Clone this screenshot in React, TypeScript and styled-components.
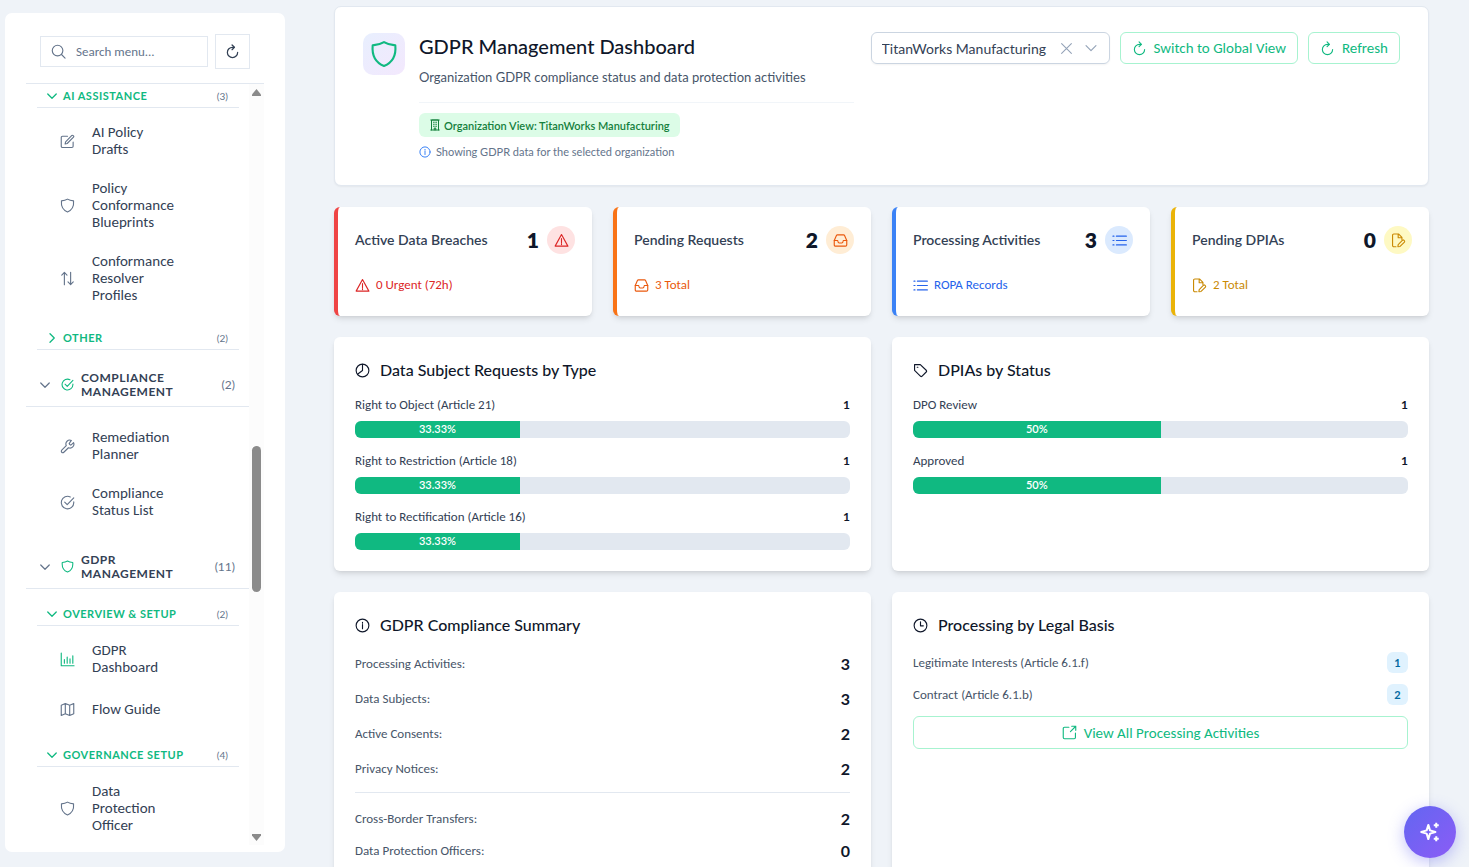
import React, { useState } from "react";
import styled, { createGlobalStyle } from "styled-components";

const GlobalStyle = createGlobalStyle`
  *, *::before, *::after { box-sizing: border-box; }
  body {
    margin: 0;
    background: #eff3f8;
    color: #0f172a;
    font-family: Carlito, Lato, "Liberation Sans", sans-serif;
    font-size: 13px;
  }
  button, input, select { font: inherit; color: inherit; }
  h1, h2, h3, p, ul, dl, dd { margin: 0; padding: 0; }
  ul { list-style: none; }
`;

/* ---------- icons ---------- */

const glyphs: Record<string, React.ReactNode> = {
  shield: <path d="M12 1.8c2.600 1.600 5.800 2.500 9.700 2.800 .8 8.500-2.400 14.700-9.700 17.700C4.700 19.300 1.500 13.100 2.300 4.600 6.200 4.300 9.400 3.400 12 1.800z" />,
  pencil: (
    <>
      <path d="M21 13v6.500a2 2 0 0 1-2 2H4a2 2 0 0 1-2-2V5.500a2 2 0 0 1 2-2h8" />
      <path d="M9 12.500 19 2.300q1-.8 2 .2l.6.600q1 1 0 2L11.500 15.200 8.200 16z" />
    </>
  ),
  sort: <path d="M7 22V2.500M2.800 6.500 7 2.300l4.200 4.200M17 2v19.500M12.800 17.500l4.200 4.200 4.200-4.200" />,
  check: (
    <>
      <path d="M22 11v1.200A10 10 0 1 1 16.500 3.200" />
      <path d="m7.500 11.500 4 4L22 4.500" />
    </>
  ),
  wrench: <path d="M15 6.500a1.200 1.200 0 0 0 0 1.500l1.400 1.400a1.200 1.200 0 0 0 1.500 0L21.700 5.800a6.200 6.200 0 0 1-8.200 8.200L6.100 21.200a2.300 2.300 0 0 1-3.300-3.300L10 10.500a6.200 6.200 0 0 1 8.200-8.200z" />,
  chart: <path d="M2 1.500V22h20.500M7 18v-6M11.500 18V8M16 18v-7M20.500 18V6" />,
  map: <path d="M2 5.200 8.500 2.500l7 2.800L22 2.500v16.300l-6.500 2.700-7-2.800L2 21.500zM8.500 2.500v16.200M15.500 5.300v16.200" />,
  refresh: (
    <>
      <path d="M20.200 13.500A8.200 8.200 0 1 1 12 5.300h2.500" />
      <path d="m11.300 1.500 3.800 3.800-3.800 3.800" />
    </>
  ),
  search: (
    <>
      <circle cx="10.500" cy="10.500" r="8.500" />
      <path d="m16.800 16.800 5.700 5.700" />
    </>
  ),
  down: <path d="m3.500 8 8.500 8.500L20.500 8" />,
  right: <path d="m8 3.500 8.500 8.500L8 20.500" />,
  times: <path d="m3 3 18 18M21 3 3 21" />,
  building: (
    <>
      <path d="M5 22V2h14v20M3.500 22h17M3.500 2h17M10.500 22v-4h3v4" />
      <path d="M9 6.500h1.500M13.500 6.500H15M9 10.500h1.500M13.500 10.500H15M9 14.500h1.500M13.500 14.500H15" />
    </>
  ),
  info: (
    <>
      <circle cx="12" cy="12" r="10.200" />
      <path d="M12 10.500v6.500M12 6.800v1.400" />
    </>
  ),
  warning: <path d="M12 2.500 1.800 21h20.400zM12 9v6M12 17v1.500" />,
  inbox: (
    <>
      <path d="M2 12 5.500 4q.5-1 1.500-1h10q1 0 1.500 1L22 12v7a2 2 0 0 1-2 2H4a2 2 0 0 1-2-2z" />
      <path d="M2 12h5.500q.5 4 2.500 4h4q2 0 2.500-4H22" />
    </>
  ),
  list: <path d="M7 5h16M7 12h16M7 19h16M1.500 5h1.700M1.500 12h1.700M1.500 19h1.700" />,
  fileEdit: (
    <>
      <path d="M8 22H4.500a2 2 0 0 1-2-2V3.500a2 2 0 0 1 2-2H12L17.500 7v3.500M11.500 2v5.500h5.500" />
      <path d="m11.500 18.500 7-7q1-.8 2 0l1 1q.8 1 0 2l-7 7-3.500.5z" />
    </>
  ),
  pie: (
    <>
      <circle cx="12" cy="12" r="10.200" />
      <path d="M12 2v10l-8 6" />
    </>
  ),
  tag: (
    <>
      <path d="M2.500 2.500h9.200L21.500 12q.8 1 0 2l-7.300 7.300q-1 .8-2 0L2.500 11.700z" />
      <path d="M6.800 6.800h1" />
    </>
  ),
  clock: (
    <>
      <circle cx="12" cy="12" r="10.200" />
      <path d="M12 6v6.500h4.500" />
    </>
  ),
  external: <path d="M11 3.500H4a2 2 0 0 0-2 2V20a2 2 0 0 0 2 2h15.500a2 2 0 0 0 2-2v-7M15.500 2H22v6.500M22 2l-8.500 8.500" />,
};

const Svg = styled.svg<{ $color?: string }>`
  display: block;
  flex: none;
  fill: none;
  stroke: ${(p) => p.$color ?? "currentColor"};
  stroke-linecap: round;
  stroke-linejoin: round;
`;

const Icon = ({ name, size = 15, weight = 1.8, color }: { name: string; size?: number; weight?: number; color?: string }) => (
  <Svg viewBox="0 0 24 24" width={size} height={size} strokeWidth={weight} $color={color} aria-hidden="true">
    {glyphs[name]}
  </Svg>
);

/* ---------- page frame ---------- */

const Page = styled.div`
  display: flex;
  align-items: flex-start;
  height: 100vh;
  overflow: hidden;
`;

const Sidebar = styled.aside`
  display: flex;
  flex-direction: column;
  flex: none;
  width: 280px;
  height: calc(100vh - 28px);
  margin: 13px 0 0 5px;
  padding: 21px 21px 7px;
  background: #fff;
  border-radius: 7px;
`;

const Main = styled.main`
  flex: 1;
  min-width: 0;
  display: flex;
  flex-direction: column;
  gap: 21px;
  padding: 6px 40px 21px 49px;
`;

/* ---------- sidebar ---------- */

const SearchRow = styled.form`
  display: flex;
  align-items: center;
  gap: 7px;
  padding: 0 14px 14px;
`;

const SearchBox = styled.label`
  display: flex;
  align-items: center;
  gap: 10px;
  flex: 1;
  min-width: 0;
  height: 31px;
  padding: 0 10px;
  border: 1px solid #e2e8f0;
  color: #64748b;
`;

const SearchInput = styled.input`
  flex: 1;
  min-width: 0;
  padding: 0;
  border: 0;
  outline: 0;
  background: none;
  font-size: 13px;
  &::placeholder { color: #64748b; opacity: 1; }
`;

const SquareButton = styled.button`
  display: grid;
  place-items: center;
  flex: none;
  width: 35px;
  height: 35px;
  padding: 0;
  border: 1px solid #e2e8f0;
  background: #fff;
  color: #334155;
`;

const MenuFrame = styled.div`
  display: flex;
  flex: 1;
  min-height: 0;
  border-top: 1px solid #e2e8f0;
`;

const Menu = styled.nav`
  flex: 1;
  min-width: 0;
  overflow: hidden;
`;

const ScrollRail = styled.div`
  display: flex;
  flex-direction: column;
  align-items: center;
  justify-content: space-between;
  width: 15px;
  padding: 5px 0 4px;
  background: #fcfcfc;
`;

const ScrollTrack = styled.div`
  flex: 1;
  display: grid;
  grid-template-rows: 348fr 145fr 240fr;
`;

const ScrollThumb = styled.span`
  grid-row: 2;
  width: 9px;
  border-radius: 5px;
  background: #8b8b8b;
`;

const Arrow = styled.svg`
  display: block;
  fill: #8b8b8b;
`;

const SectionHead = styled.button`
  display: flex;
  align-items: center;
  width: 100%;
  height: 44px;
  margin-top: 13px;
  padding: 0 14px 0 13px;
  border: 0;
  border-bottom: 1px solid #e2e8f0;
  background: none;
  color: #64748b;
  text-align: left;
`;

const SectionTitle = styled.span`
  flex: 1;
  margin-left: 7px;
  padding-right: 28px;
  color: #334155;
  font-family: Lato, sans-serif;
  font-size: 12px;
  font-weight: 700;
  line-height: 14px;
  letter-spacing: 0.5px;
  text-transform: uppercase;
`;

const SectionChevron = styled.span`
  margin-right: 10px;
`;

const GroupHead = styled.button`
  display: flex;
  align-items: center;
  gap: 5px;
  width: calc(100% - 21px);
  height: 24px;
  margin-left: 11px;
  padding: 0 11px 0 9px;
  border: 0;
  border-bottom: 1px solid #e2e8f0;
  background: none;
  color: #10b981;
`;

const GroupTitle = styled.span`
  flex: 1;
  text-align: left;
  font-family: Lato, sans-serif;
  font-size: 11px;
  font-weight: 700;
  letter-spacing: 0.5px;
  text-transform: uppercase;
`;

const Count = styled.span<{ $large?: boolean }>`
  color: #64748b;
  font-family: Lato, sans-serif;
  font-size: ${(p) => (p.$large ? 12 : 10)}px;
`;

const Items = styled.ul<{ $direct?: boolean }>`
  padding: ${(p) => (p.$direct ? "11px 0 2px" : "5px 0 11px")};
`;

const ItemLink = styled.a<{ $active?: boolean }>`
  display: flex;
  align-items: center;
  gap: 17px;
  min-height: 45px;
  padding: 11px 70px 11px 34px;
  color: #334155;
  font-size: 15px;
  line-height: 17px;
  text-decoration: none;
  svg { color: ${(p) => (p.$active ? "#10b981" : "#64748b")}; }
`;

const MenuItem = ({ icon, label, active }: { icon: string; label: string; active?: boolean }) => (
  <li>
    <ItemLink href="#" $active={active}>
      <Icon name={icon} />
      <span>{label}</span>
    </ItemLink>
  </li>
);

const Group = ({ label, count, open = true, children }: { label: string; count: number; open?: boolean; children?: React.ReactNode }) => (
  <>
    <GroupHead type="button" aria-expanded={open}>
      <Icon name={open ? "down" : "right"} size={12} weight={2.6} />
      <GroupTitle>{label}</GroupTitle>
      <Count>({count})</Count>
    </GroupHead>
    {children && <Items>{children}</Items>}
  </>
);

const Section = ({ icon, label, count }: { icon: string; label: string; count: number }) => (
  <SectionHead type="button" aria-expanded>
    <SectionChevron>
      <Icon name="down" size={12} weight={2.4} />
    </SectionChevron>
    <Icon name={icon} size={13} color="#10b981" weight={2} />
    <SectionTitle>{label}</SectionTitle>
    <Count $large>({count})</Count>
  </SectionHead>
);

const SectionGap = styled.div`
  height: 13px;
`;

/* ---------- header card ---------- */

const HeaderCard = styled.header`
  display: flex;
  align-items: flex-start;
  gap: 17px;
  min-height: 180px;
  padding: 25px 28px 24px;
  background: #fff;
  border: 1px solid #e2e8f0;
  border-radius: 7px;
  box-shadow: 0 1px 2px rgba(0, 0, 0, 0.05);
`;

const HeaderInfo = styled.div`
  display: flex;
  flex: 1;
  min-width: 0;
  gap: 14px;
`;

const Emblem = styled.span`
  display: grid;
  place-items: center;
  flex: none;
  width: 42px;
  height: 42px;
  margin-top: 1px;
  border-radius: 10px;
  background: linear-gradient(135deg, #e8effe, #f3e8fd);
  color: #10b981;
`;

const HeaderText = styled.div`
  flex: 1;
  min-width: 0;
`;

const Title = styled.h1`
  font-family: Lato, sans-serif;
  font-size: 20px;
  font-weight: 500;
  line-height: 28px;
`;

const Subtitle = styled.p`
  margin-top: 7px;
  padding-bottom: 14px;
  border-bottom: 1px solid #f1f5f9;
  color: #475569;
  font-family: Lato, sans-serif;
  font-size: 13px;
  line-height: 21px;
`;

const OrgBadge = styled.span`
  display: inline-flex;
  align-items: center;
  gap: 3px;
  height: 24px;
  margin-top: 10px;
  padding: 0 10px;
  border-radius: 6px;
  background: #dcfce7;
  color: #15803d;
  font-family: Lato, sans-serif;
  font-size: 11px;
  font-weight: 600;
`;

const Hint = styled.p`
  display: flex;
  align-items: center;
  gap: 5px;
  margin-top: 7px;
  color: #64748b;
  font-family: Lato, sans-serif;
  font-size: 11px;
  line-height: 16px;
  svg { color: #3b82f6; }
`;

const Controls = styled.div`
  display: flex;
  gap: 10px;
`;

const SelectBox = styled.div`
  display: flex;
  align-items: center;
  gap: 11px;
  width: 239px;
  height: 32px;
  padding: 0 11px 0 10px;
  border: 1px solid #cbd5e1;
  border-radius: 6px;
  color: #94a3b8;
  box-shadow: 0 1px 2px rgba(18, 18, 23, 0.05);
`;

const Select = styled.select`
  flex: 1;
  min-width: 0;
  padding: 0;
  border: 0;
  outline: 0;
  appearance: none;
  background: none;
  color: #334155;
  font-family: Lato, sans-serif;
  font-size: 14px;
`;

const ClearButton = styled.button`
  padding: 0;
  border: 0;
  background: none;
  color: #94a3b8;
`;

const OutlineButton = styled.button<{ $block?: boolean }>`
  display: flex;
  align-items: center;
  justify-content: center;
  gap: 7px;
  width: ${(p) => (p.$block ? "100%" : "auto")};
  height: ${(p) => (p.$block ? 33 : 32)}px;
  padding: 0 11px;
  border: 1px solid #a7f3d0;
  border-radius: 6px;
  background: #fff;
  color: #10b981;
  font-size: 15px;
  white-space: nowrap;
`;

/* ---------- cards ---------- */

const shadow = "0 4px 6px -1px rgba(0, 0, 0, 0.1), 0 2px 4px -2px rgba(0, 0, 0, 0.1)";

const StatGrid = styled.section`
  display: grid;
  grid-template-columns: repeat(4, 1fr);
  gap: 21px;
`;

const StatCard = styled.article<{ $edge: string }>`
  min-height: 109px;
  padding: 19px 17px;
  border-left: 4px solid ${(p) => p.$edge};
  border-radius: 6px;
  background: #fff;
  box-shadow: ${shadow};
`;

const StatTop = styled.div`
  display: flex;
  align-items: center;
  gap: 8px;
`;

const StatTitle = styled.h3`
  flex: 1;
  padding-bottom: 2px;
  color: #334155;
  font-family: Lato, sans-serif;
  font-size: 14px;
  font-weight: 600;
`;

const StatValue = styled.strong`
  font-family: Lato, sans-serif;
  font-size: 21px;
  font-weight: 800;
  line-height: 28px;
`;

const StatDisc = styled.span<{ $bg: string; $ink: string }>`
  display: grid;
  place-items: center;
  width: 28px;
  height: 28px;
  border-radius: 50%;
  background: ${(p) => p.$bg};
  color: ${(p) => p.$ink};
`;

const StatNote = styled.p<{ $ink: string }>`
  display: flex;
  align-items: center;
  gap: 6px;
  margin-top: 21px;
  color: ${(p) => p.$ink};
  line-height: 20px;
`;

const PanelGrid = styled.section`
  display: grid;
  grid-template-columns: repeat(2, 1fr);
  gap: 21px;
`;

const Panel = styled.article`
  padding: 21px;
  border-radius: 6px;
  background: #fff;
  box-shadow: ${shadow};
`;

const PanelTitle = styled.h2`
  display: flex;
  align-items: center;
  gap: 10px;
  margin-bottom: 12px;
  font-family: Lato, sans-serif;
  font-size: 16px;
  font-weight: 500;
  line-height: 24px;
`;

const Meter = styled.div`
  & + & { margin-top: 12px; }
`;

const MeterHead = styled.div`
  display: flex;
  justify-content: space-between;
  align-items: center;
  margin-bottom: 6px;
  color: #334155;
  line-height: 21px;
`;

const MeterValue = styled.b`
  color: #0f172a;
  font-family: Lato, sans-serif;
  font-size: 12px;
`;

const Track = styled.div`
  height: 17px;
  border-radius: 6px;
  background: #e2e8f0;
  overflow: hidden;
`;

const Fill = styled.div`
  height: 100%;
  background: #10b981;
  color: #fff;
  font-family: Lato, sans-serif;
  font-size: 11px;
  font-weight: 600;
  line-height: 16px;
  text-align: center;
`;

const Facts = styled.dl<{ $second?: boolean }>`
  display: flex;
  flex-direction: column;
  gap: ${(p) => (p.$second ? 8 : 11)}px;
  padding-top: ${(p) => (p.$second ? 14 : 3)}px;
  padding-bottom: ${(p) => (p.$second ? 0 : 11)}px;
  border-top: ${(p) => (p.$second ? "1px solid #e2e8f0" : "0")};
`;

const Fact = styled.div`
  display: flex;
  justify-content: space-between;
  align-items: center;
  color: #475569;
  line-height: 24px;
  dd {
    color: #0f172a;
    font-family: Lato, sans-serif;
    font-size: 16px;
    font-weight: 700;
  }
`;

const BasisList = styled.ul`
  padding-top: 3px;
`;

const BasisRow = styled.li`
  display: flex;
  justify-content: space-between;
  align-items: center;
  margin-bottom: 11px;
  color: #475569;
  line-height: 21px;
`;

const BasisCount = styled.span`
  min-width: 21px;
  border-radius: 6px;
  background: #e0f2fe;
  color: #0369a1;
  font-family: Lato, sans-serif;
  font-size: 11px;
  font-weight: 700;
  text-align: center;
`;

const AssistantButton = styled.button`
  position: fixed;
  right: 13px;
  bottom: 9px;
  display: grid;
  place-items: center;
  width: 52px;
  height: 52px;
  padding: 0;
  border: 0;
  border-radius: 50%;
  background: linear-gradient(135deg, #6366f1, #8b5cf6);
  box-shadow: 0 4px 16px rgba(99, 102, 241, 0.4);
`;

const stats = [
  { title: "Active Data Breaches", value: 1, icon: "warning", note: "0 Urgent (72h)", edge: "#ef4444", bg: "#fee2e2", ink: "#dc2626" },
  { title: "Pending Requests", value: 2, icon: "inbox", note: "3 Total", edge: "#f97316", bg: "#ffedd5", ink: "#ea580c" },
  { title: "Processing Activities", value: 3, icon: "list", note: "ROPA Records", edge: "#3b82f6", bg: "#dbeafe", ink: "#2563eb" },
  { title: "Pending DPIAs", value: 0, icon: "fileEdit", note: "2 Total", edge: "#eab308", bg: "#fef9c3", ink: "#ca8a04" },
];

const requestTypes: [string, number, number][] = [
  ["Right to Object (Article 21)", 1, 33.33],
  ["Right to Restriction (Article 18)", 1, 33.33],
  ["Right to Rectification (Article 16)", 1, 33.33],
];

const dpiaStatuses: [string, number, number][] = [
  ["DPO Review", 1, 50],
  ["Approved", 1, 50],
];

const Meters = ({ rows }: { rows: [string, number, number][] }) => (
  <>
    {rows.map(([label, value, pct]) => (
      <Meter key={label}>
        <MeterHead>
          <span>{label}</span>
          <MeterValue>{value}</MeterValue>
        </MeterHead>
        <Track role="progressbar" aria-label={label} aria-valuenow={pct}>
          <Fill style={{ width: `${pct}%` }}>{pct}%</Fill>
        </Track>
      </Meter>
    ))}
  </>
);

const FactRows = ({ rows, second }: { rows: [string, number][]; second?: boolean }) => (
  <Facts $second={second}>
    {rows.map(([label, value]) => (
      <Fact key={label}>
        <dt>{label}:</dt>
        <dd>{value}</dd>
      </Fact>
    ))}
  </Facts>
);

export default function App() {
  const [query, setQuery] = useState("");
  return (
    <Page>
      <GlobalStyle />
      <Sidebar>
        <SearchRow onSubmit={(e) => e.preventDefault()}>
          <SearchBox>
            <Icon name="search" />
            <SearchInput aria-label="Search menu" placeholder="Search menu..." value={query} onChange={(e) => setQuery(e.target.value)} />
          </SearchBox>
          <SquareButton type="button" aria-label="Reload menu">
            <Icon name="refresh" weight={2} />
          </SquareButton>
        </SearchRow>
        <MenuFrame>
          <Menu aria-label="Main menu">
            <Group label="AI Assistance" count={3}>
              <MenuItem icon="pencil" label="AI Policy Drafts" />
              <MenuItem icon="shield" label="Policy Conformance Blueprints" />
              <MenuItem icon="sort" label="Conformance Resolver Profiles" />
            </Group>
            <Group label="Other" count={2} open={false} />
            <Section icon="check" label="Compliance Management" count={2} />
            <Items $direct>
              <MenuItem icon="wrench" label="Remediation Planner" />
              <MenuItem icon="check" label="Compliance Status List" />
            </Items>
            <Section icon="shield" label="GDPR Management" count={11} />
            <SectionGap />
            <Group label="Overview & Setup" count={2}>
              <MenuItem icon="chart" label="GDPR Dashboard" active />
              <MenuItem icon="map" label="Flow Guide" />
            </Group>
            <Group label="Governance Setup" count={4}>
              <MenuItem icon="shield" label="Data Protection Officer" />
            </Group>
          </Menu>
          <ScrollRail aria-hidden="true">
            <Arrow width="9" height="7" viewBox="0 0 9 7"><path d="M4.500 0 9 5.500V7H0V5.500z" /></Arrow>
            <ScrollTrack><ScrollThumb /></ScrollTrack>
            <Arrow width="9" height="7" viewBox="0 0 9 7"><path d="M4.500 7 9 1.500V0H0v1.500z" /></Arrow>
          </ScrollRail>
        </MenuFrame>
      </Sidebar>

      <Main>
        <HeaderCard>
          <HeaderInfo>
            <Emblem><Icon name="shield" size={28} weight={1.8} /></Emblem>
            <HeaderText>
              <Title>GDPR Management Dashboard</Title>
              <Subtitle>Organization GDPR compliance status and data protection activities</Subtitle>
              <OrgBadge><Icon name="building" size={12} weight={2} />Organization View: TitanWorks Manufacturing</OrgBadge>
              <Hint><Icon name="info" size={12} weight={2} />Showing GDPR data for the selected organization</Hint>
            </HeaderText>
          </HeaderInfo>
          <Controls>
            <SelectBox>
              <Select aria-label="Organization">
                <option>TitanWorks Manufacturing</option>
              </Select>
              <ClearButton type="button" aria-label="Clear organization"><Icon name="times" size={13} weight={2} /></ClearButton>
              <Icon name="down" size={14} weight={2} />
            </SelectBox>
            <OutlineButton type="button"><Icon name="refresh" />Switch to Global View</OutlineButton>
            <OutlineButton type="button"><Icon name="refresh" />Refresh</OutlineButton>
          </Controls>
        </HeaderCard>

        <StatGrid>
          {stats.map((s) => (
            <StatCard key={s.title} $edge={s.edge}>
              <StatTop>
                <StatTitle>{s.title}</StatTitle>
                <StatValue>{s.value}</StatValue>
                <StatDisc $bg={s.bg} $ink={s.ink}><Icon name={s.icon} /></StatDisc>
              </StatTop>
              <StatNote $ink={s.ink}><Icon name={s.icon} />{s.note}</StatNote>
            </StatCard>
          ))}
        </StatGrid>

        <PanelGrid>
          <Panel>
            <PanelTitle><Icon name="pie" />Data Subject Requests by Type</PanelTitle>
            <Meters rows={requestTypes} />
          </Panel>
          <Panel>
            <PanelTitle><Icon name="tag" />DPIAs by Status</PanelTitle>
            <Meters rows={dpiaStatuses} />
          </Panel>
        </PanelGrid>

        <PanelGrid>
          <Panel>
            <PanelTitle><Icon name="info" />GDPR Compliance Summary</PanelTitle>
            <FactRows rows={[["Processing Activities", 3], ["Data Subjects", 3], ["Active Consents", 2], ["Privacy Notices", 2]]} />
            <FactRows second rows={[["Cross-Border Transfers", 2], ["Data Protection Officers", 0]]} />
          </Panel>
          <Panel>
            <PanelTitle><Icon name="clock" />Processing by Legal Basis</PanelTitle>
            <BasisList>
              <BasisRow><span>Legitimate Interests (Article 6.1.f)</span><BasisCount>1</BasisCount></BasisRow>
              <BasisRow><span>Contract (Article 6.1.b)</span><BasisCount>2</BasisCount></BasisRow>
            </BasisList>
            <OutlineButton type="button" $block><Icon name="external" />View All Processing Activities</OutlineButton>
          </Panel>
        </PanelGrid>
      </Main>

      <AssistantButton type="button" aria-label="Open AI assistant">
        <svg width="20" height="20" viewBox="0 0 24 24" fill="none" stroke="#fff" strokeWidth="2.400" strokeLinejoin="round" aria-hidden="true">
          <path d="M10 3.500 12 10l6.500 2-6.500 2-2 6.500L8 14l-6.500-2L8 10z" />
          <path d="M19.500 1v6M16.500 4h6M19.500 17v6M16.500 20h6" />
        </svg>
      </AssistantButton>
    </Page>
  );
}
